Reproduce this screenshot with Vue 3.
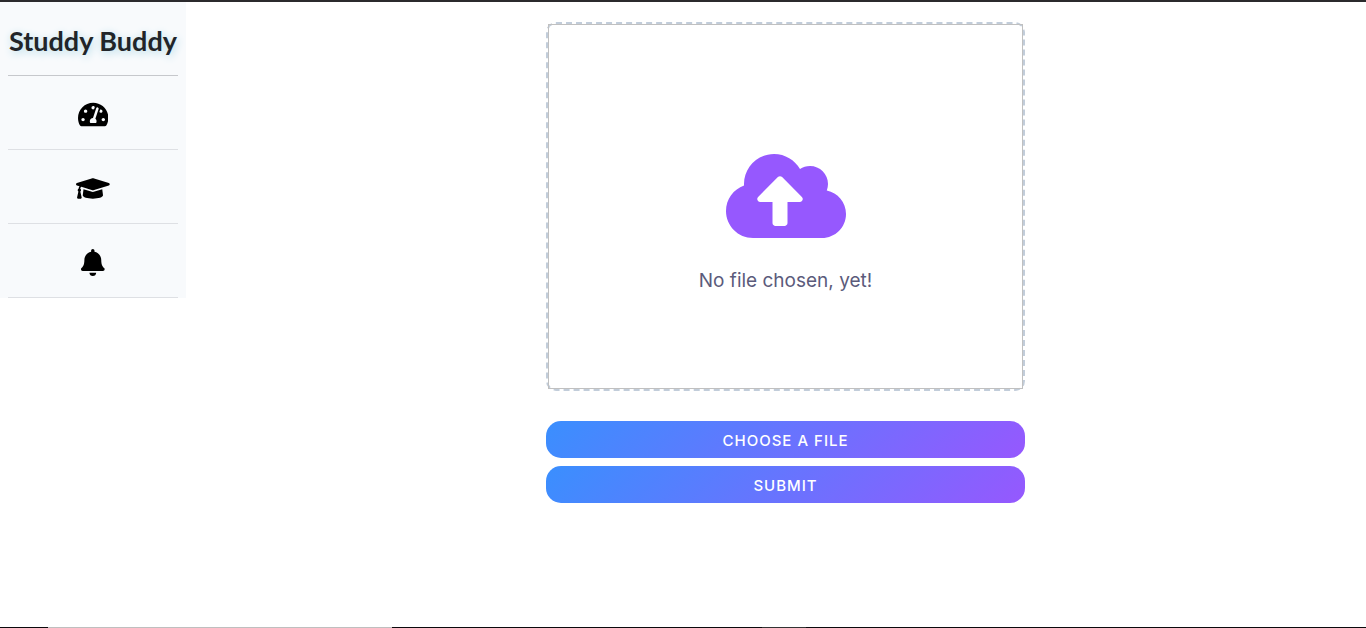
<script setup>
const links = [
  {
    label: 'Dashboard',
    viewBox: '0 0 576 512',
    path: 'M288 32C128.94 32 0 160.94 0 320c0 52.8 14.25 102.26 39.06 144.8 5.61 9.62 16.3 15.2 27.44 15.2h443c11.14 0 21.83-5.58 27.44-15.2C561.75 422.26 576 372.8 576 320c0-159.06-128.94-288-288-288zm0 64c14.71 0 26.58 10.13 30.32 23.65-1.11 2.26-2.64 4.23-3.45 6.67l-9.22 27.67c-5.13 3.49-10.97 6.01-17.64 6.01-17.67 0-32-14.33-32-32S270.33 96 288 96zM96 384c-17.67 0-32-14.33-32-32s14.33-32 32-32 32 14.33 32 32-14.33 32-32 32zm48-160c-17.67 0-32-14.33-32-32s14.33-32 32-32 32 14.33 32 32-14.33 32-32 32zm246.77-72.41l-61.33 184C343.13 347.33 352 364.54 352 384c0 11.72-3.38 22.55-8.88 32H232.88c-5.5-9.45-8.88-20.28-8.88-32 0-33.94 26.5-61.43 59.9-63.59l61.34-184.01c4.17-12.56 17.73-19.45 30.36-15.17 12.57 4.19 19.35 17.79 15.17 30.36zm14.66 57.2l15.52-46.55c3.47-1.29 7.13-2.23 11.05-2.23 17.67 0 32 14.33 32 32s-14.33 32-32 32c-11.38-.01-20.89-6.28-26.57-15.22zM480 384c-17.67 0-32-14.33-32-32s14.33-32 32-32 32 14.33 32 32-14.33 32-32 32z',
  },
  {
    label: 'Courses',
    viewBox: '0 0 640 512',
    path: 'M622.34 153.2L343.4 67.5c-15.2-4.67-31.6-4.67-46.79 0L17.66 153.2c-23.54 7.23-23.54 38.36 0 45.59l48.63 14.94c-10.67 13.19-17.23 29.28-17.88 46.9C38.78 266.15 32 276.11 32 288c0 10.78 5.68 19.85 13.86 25.65L20.33 428.53C18.11 438.52 25.71 448 35.94 448h56.11c10.24 0 17.84-9.48 15.62-19.47L82.14 313.65C90.32 307.85 96 298.78 96 288c0-11.57-6.47-21.25-15.66-26.87.76-15.02 8.44-28.3 20.69-36.72L296.6 284.5c9.06 2.78 26.44 6.25 46.79 0l278.95-85.7c23.55-7.24 23.55-38.36 0-45.6zM352.79 315.09c-28.53 8.76-52.84 3.92-65.59 0l-145.02-44.55L128 384c0 35.35 85.96 64 192 64s192-28.65 192-64l-14.18-113.47-145.03 44.56z',
  },
  {
    label: 'Notifications',
    viewBox: '0 0 448 512',
    path: 'M224 512c35.32 0 63.97-28.65 63.97-64H160.03c0 35.35 28.65 64 63.97 64zm215.39-149.71c-19.32-20.76-55.47-51.99-55.47-154.29 0-77.7-54.48-139.9-127.94-155.16V32c0-17.67-14.32-32-31.98-32s-31.98 14.33-31.98 32v20.84C118.56 68.1 64.08 130.3 64.08 208c0 102.3-36.15 133.53-55.47 154.29-6 6.45-8.66 14.16-8.61 21.71.11 16.4 12.98 32 32.1 32h383.8c19.12 0 32-15.6 32.1-32 .05-7.55-2.61-15.27-8.61-21.71z',
  },
]
</script>

<template>
  <div class="page">
    <div class="layout">
      <aside class="sidebar">
        <h1 class="brand">Studdy Buddy</h1>
        <nav>
          <a v-for="link in links" :key="link.label" class="nav-link" href="#" :aria-label="link.label">
            <svg class="nav-icon" :viewBox="link.viewBox" aria-hidden="true"><path :d="link.path" /></svg>
          </a>
        </nav>
      </aside>
      <main class="content">
        <section class="uploader">
          <div class="drop-zone">
            <div class="preview">
              <svg class="cloud" viewBox="0 32 640 448" aria-hidden="true">
                <path d="M537.6 226.6c4.1-10.7 6.4-22.4 6.4-34.6 0-53-43-96-96-96-19.7 0-38.1 6-53.3 16.2C367 64.2 315.3 32 256 32c-88.4 0-160 71.6-160 160 0 2.7.1 5.4.2 8.1C40.2 219.8 0 273.2 0 336c0 79.5 64.5 144 144 144h368c70.7 0 128-57.3 128-128 0-61.9-44-113.6-102.4-125.4zM393.4 288H328v112c0 8.8-7.2 16-16 16h-48c-8.8 0-16-7.2-16-16V288h-65.4c-14.3 0-21.4-17.2-11.3-27.3l105.4-105.4c6.2-6.2 16.4-6.2 22.6 0l105.4 105.4c10.1 10.1 2.9 27.3-11.3 27.3z" />
              </svg>
              <p class="hint">No file chosen, yet!</p>
            </div>
          </div>
          <div class="actions">
            <button type="button" class="action">Choose a file</button>
            <button type="submit" class="action">Submit</button>
          </div>
        </section>
      </main>
    </div>
    <div class="edge">
      <span class="edge-field"></span>
      <span class="edge-tab"></span>
    </div>
  </div>
</template>

<style>
body {
  margin: 0;
  background: #fff;
}
</style>

<style scoped>
.page {
  box-sizing: border-box;
  min-height: 100vh;
  display: flex;
  flex-direction: column;
  border-top: 2px solid #2b2a2d;
  font-family: Inter, "Open Sans", sans-serif;
}
.layout {
  flex: 1;
  display: flex;
  align-items: flex-start;
}
.sidebar {
  padding: 0 8px;
  background: #f8fafc;
}
.brand {
  margin: 0;
  box-sizing: border-box;
  min-width: 170px;
  height: 74px;
  line-height: 77px;
  border-bottom: 1px solid #c6c8cc;
  font-family: Lato, "Open Sans", sans-serif;
  font-size: 27px;
  font-weight: 700;
  text-align: center;
  white-space: nowrap;
  color: #212529;
  text-shadow: 1px 2px 8px #add8e6;
}
.nav-link {
  box-sizing: border-box;
  display: flex;
  align-items: center;
  justify-content: center;
  height: 74px;
  padding-top: 3px;
  border-bottom: 1px solid #dee0e4;
}
.nav-icon {
  height: 27px;
  fill: #000;
}
.content {
  flex: 1;
  display: flex;
  justify-content: center;
  padding: 20px 0 20px 19px;
}
.uploader {
  width: 100%;
  max-width: 479px;
}
.drop-zone {
  border: 2px dashed #c2cdda;
  border-radius: 10px;
}
.preview {
  display: flex;
  flex-direction: column;
  align-items: center;
  padding: 129px 0 91px;
  border: 1px solid #c0c0c0;
}
.cloud {
  width: 120px;
  height: 84px;
  fill: #9658fe;
}
.hint {
  margin: 27px 0 0;
  line-height: 32px;
  font-size: 19px;
  color: #5b5b7b;
}
.actions {
  display: grid;
  gap: 8px;
  margin-top: 30px;
}
.action {
  height: 37px;
  padding: 2px 0 0;
  border: 0;
  border-radius: 15px;
  background: linear-gradient(135deg, #3a8ffe 0%, #9658fe 100%);
  color: #fff;
  font: 500 15px/24px Inter, "Open Sans", sans-serif;
  letter-spacing: 1px;
  text-transform: uppercase;
  cursor: pointer;
}
.edge {
  display: flex;
  height: 1px;
  padding-left: 48px;
  background: #0b090c;
}
.edge-field {
  width: 344px;
  background: #bfbfbf;
}
.edge-tab {
  width: 44px;
  margin-left: 370px;
  background: #333;
}
</style>
